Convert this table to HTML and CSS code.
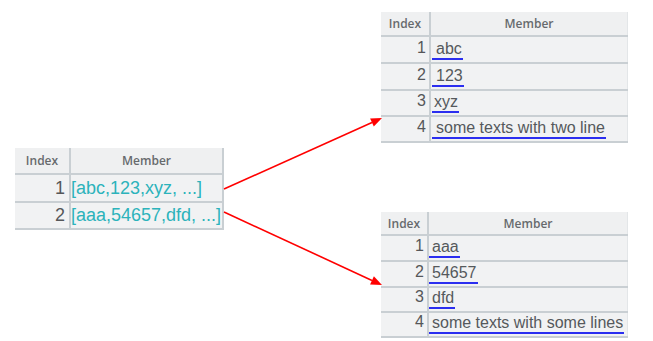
FILE: index.html
```html
<!DOCTYPE html>
<html>
<head>
<meta charset="utf-8">
<link rel="stylesheet" href="styles.css">
</head>
<body>
<div class="canvas">
  <table class="grid grid-src">
    <colgroup><col class="c-idx"><col></colgroup>
    <tr class="hdr"><th>Index</th><th>Member</th></tr>
    <tr class="r1"><td class="idx">1</td><td class="seq">[abc,123,xyz, ...]</td></tr>
    <tr class="r2"><td class="idx">2</td><td class="seq">[aaa,54657,dfd, ...]</td></tr>
  </table>

  <table class="grid grid-top">
    <colgroup><col class="c-idx"><col></colgroup>
    <tr class="hdr"><th>Index</th><th>Member</th></tr>
    <tr class="ra"><td class="idx">1</td><td class="mem"><span>abc</span></td></tr>
    <tr class="ra"><td class="idx">2</td><td class="mem"><span>123</span></td></tr>
    <tr class="rb"><td class="idx">3</td><td class="mem"><span class="tight">xyz</span></td></tr>
    <tr class="rb"><td class="idx">4</td><td class="mem"><span>some texts with two line</span></td></tr>
  </table>

  <table class="grid grid-bot">
    <colgroup><col class="c-idx"><col></colgroup>
    <tr class="hdr"><th>Index</th><th>Member</th></tr>
    <tr class="ra"><td class="idx">1</td><td class="mem"><span>aaa</span></td></tr>
    <tr class="ra"><td class="idx">2</td><td class="mem"><span>54657</span></td></tr>
    <tr class="rb"><td class="idx">3</td><td class="mem"><span>dfd</span></td></tr>
    <tr class="rb"><td class="idx">4</td><td class="mem"><span>some texts with some lines</span></td></tr>
  </table>

  <svg class="arrows" width="653" height="341" viewBox="0 0 653 341">
    <line x1="224" y1="189" x2="372" y2="122.5" stroke="#ff0000" stroke-width="1.6"/>
    <polygon points="382,118 373.8,126.6 370.1,118.4" fill="#ff0000"/>
    <line x1="224" y1="212" x2="372" y2="280.4" stroke="#ff0000" stroke-width="1.6"/>
    <polygon points="382,285 370.1,284.5 373.9,276.3" fill="#ff0000"/>
  </svg>
</div>
</body>
</html>
```

FILE: styles.css
```css
html, body {
  margin: 0;
  padding: 0;
  background: #ffffff;
}

.canvas {
  position: relative;
  width: 653px;
  height: 341px;
  overflow: hidden;
  font-family: "Liberation Sans", Arial, sans-serif;
}

.grid {
  position: absolute;
  border-collapse: collapse;
  table-layout: fixed;
  background: #f1f2f3;
}

.grid th,
.grid td {
  padding: 0;
  border-bottom: 2px solid #c9cfd3;
  box-sizing: border-box;
  white-space: nowrap;
  overflow: hidden;
}

.grid th:first-child,
.grid td:first-child {
  border-right: 2px solid #c9cfd3;
}

.grid th {
  font-family: "Open Sans", "Liberation Sans", sans-serif;
  font-weight: 600;
  font-size: 12px;
  color: #676a6d;
  text-align: center;
  background: #eff0f1;
  vertical-align: middle;
}

.idx {
  text-align: right;
  color: #555759;
}

/* Source table */
.grid-src {
  left: 15px;
  top: 148px;
  width: 209px;
  border-right: 2px solid #c9cfd3;
}
.grid-src .c-idx { width: 55px; }
.grid-src .hdr { height: 26px; }
.grid-src .r1 { height: 28px; }
.grid-src .r2 { height: 27px; }
.grid-src td {
  font-size: 18px;
}
.grid-src .idx { padding-right: 4px; }
.seq {
  color: #2cb3bb;
  padding-left: 8px;
  text-align: left;
}

/* Target tables */
.grid-top {
  left: 381px;
  top: 12px;
  width: 247px;
  border-right: 1px solid #e3e6e8;
}
.grid-top .c-idx { width: 49px; }
.grid-top .hdr { height: 24px; }
.grid-top .ra { height: 27px; }
.grid-top .rb { height: 26px; }

.grid-bot {
  left: 381px;
  top: 212px;
  width: 247px;
  border-right: 1px solid #e3e6e8;
}
.grid-bot .c-idx { width: 47px; }
.grid-bot .hdr { height: 23px; }
.grid-bot .ra { height: 26px; }
.grid-bot .rb { height: 25px; }

.grid-top td,
.grid-bot td {
  font-size: 16px;
  vertical-align: bottom;
  padding-bottom: 2px;
  line-height: 18px;
}
.grid-top .idx,
.grid-bot .idx {
  padding-right: 3px;
  padding-bottom: 5px;
}

.mem {
  text-align: left;
  color: #55595c;
}
.mem span {
  display: inline-block;
  margin-left: 1px;
  padding: 0 1px 0 4px;
  line-height: 18px;
  border-bottom: 2px solid #2b2ef0;
}
.mem span.tight {
  padding-left: 2px;
}
.grid-bot .mem span {
  margin-left: 0;
  padding-left: 3px;
}

.arrows {
  position: absolute;
  left: 0;
  top: 0;
  pointer-events: none;
}
```
